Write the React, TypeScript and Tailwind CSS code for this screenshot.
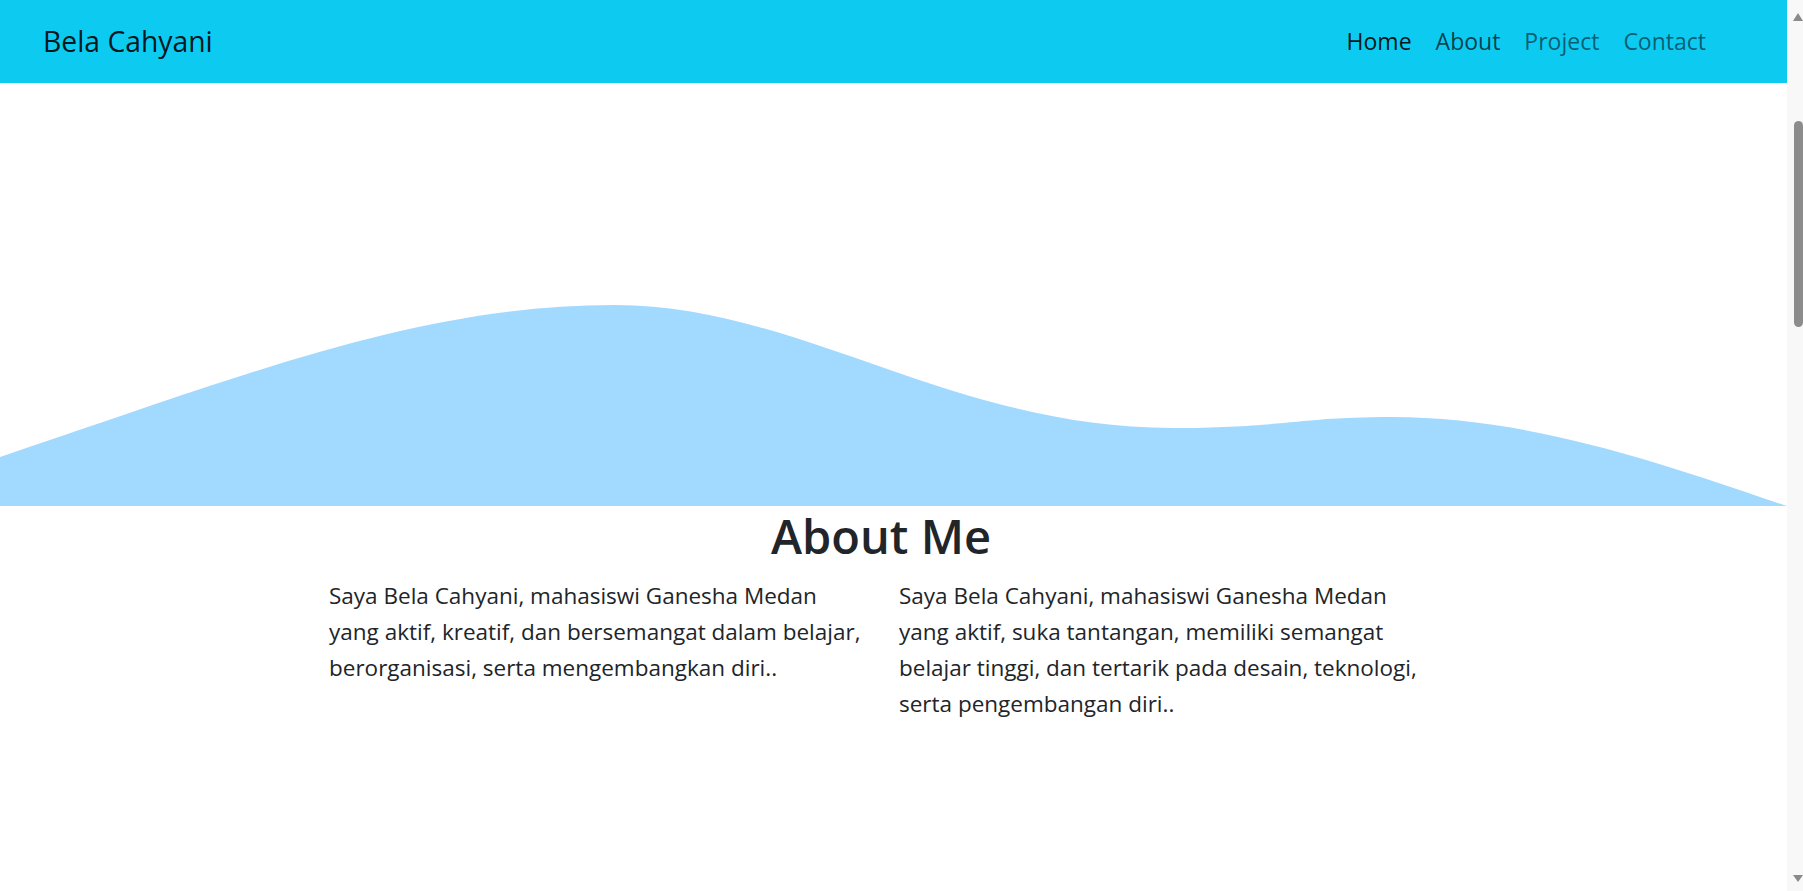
import React from "react";

const LINKS = [
  { label: "Home", color: "text-black/90" },
  { label: "About", color: "text-black/70" },
  { label: "Project", color: "text-black/55" },
  { label: "Contact", color: "text-black/55" },
];

const ABOUT = [
  "Saya Bela Cahyani, mahasiswi Ganesha Medan yang aktif, kreatif, dan bersemangat dalam belajar, berorganisasi, serta mengembangkan diri..",
  "Saya Bela Cahyani, mahasiswi Ganesha Medan yang aktif, suka tantangan, memiliki semangat belajar tinggi, dan tertarik pada desain, teknologi, serta pengembangan diri..",
];

function Scrollbar() {
  return (
    <div className="flex w-[16px] shrink-0 flex-col bg-[#f8f8f8]">
      <svg width="16" height="24" viewBox="0 0 16 24" className="shrink-0">
        <path d="M6,21 L11,13 L16,21 Z" fill="#8a8a8a" />
      </svg>
      <div className="ml-[7px] mt-[97px] h-[206px] w-[9px] rounded-full bg-[#8c8c8c]" />
      <div className="flex-1" />
      <svg width="16" height="24" viewBox="0 0 16 24" className="shrink-0">
        <path d="M6,8 L16,8 L11,15 Z" fill="#8a8a8a" />
      </svg>
    </div>
  );
}

export default function App() {
  return (
    <div
      className="flex h-screen w-full overflow-hidden bg-white text-[#212529]"
      style={{ fontFamily: '"Open Sans", "Noto Sans", sans-serif' }}
    >
      <div className="min-w-0 flex-1">
        {/* Navbar */}
        <nav className="flex h-[83px] items-center justify-between bg-[#0dcaf0] pl-[43px] pr-[69px]">
          <a className="text-[28.3px] text-black/90">Bela Cahyani</a>
          <ul className="flex items-center">
            {LINKS.map((l) => (
              <li key={l.label}>
                <a className={`px-[12px] text-[23px] ${l.color}`}>{l.label}</a>
              </li>
            ))}
          </ul>
        </nav>

        {/* Wave */}
        <svg
          className="block h-[423px] w-full"
          viewBox="0 0 1787 423"
          preserveAspectRatio="none"
        >
          <path
            fill="#a2d9ff"
            d="M0,374 C250,290 420,222 615,222 C800,222 950,345 1173,345 C1280,345 1300,334 1391,334 C1530,334 1660,380 1787,423 L0,423 Z"
          />
        </svg>

        {/* About */}
        <section className="flex justify-center pr-[19px]">
          <div className="w-[1140px]">
            <h2 className="mt-[2px] pr-[6px] text-center text-[47px] font-semibold leading-[1.2]">About Me</h2>
            <div className="mt-[14px] grid grid-cols-2">
              {ABOUT.map((t, i) => (
                <p key={i} className="px-[15px] text-[22.5px] leading-[36px]">
                  {t}
                </p>
              ))}
            </div>
          </div>
        </section>
      </div>
      <Scrollbar />
    </div>
  );
}
